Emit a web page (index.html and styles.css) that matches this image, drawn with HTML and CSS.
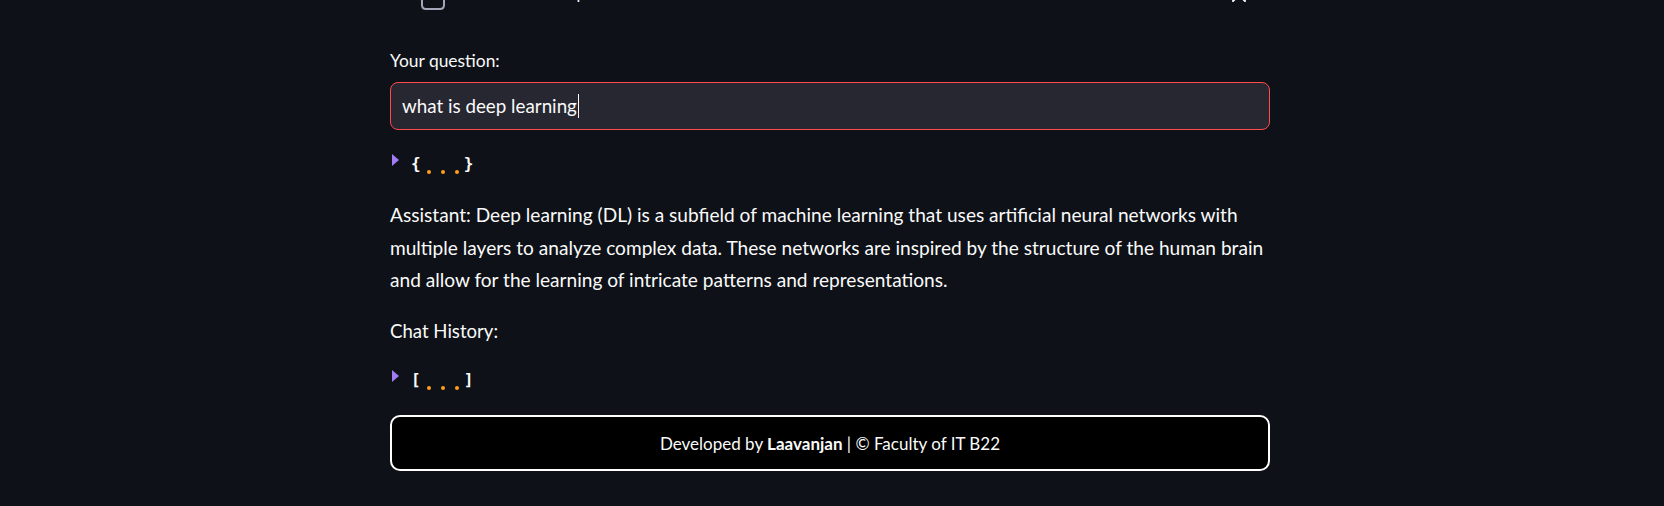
FILE: index.html
```html
<!DOCTYPE html>
<html lang="en">
<head>
<meta charset="utf-8">
<title>Chat</title>
<link rel="stylesheet" href="styles.css">
</head>
<body>
<div class="page">
  <main class="main">
    <div class="file-row">
      <svg class="file-icon" width="24" height="32" viewBox="0 0 24 32" aria-hidden="true">
        <path d="M4 1 H15 L23 9 V27 Q23 31 19 31 H5 Q1 31 1 27 V4 Q1 1 4 1 Z" fill="none" stroke="#a3a8b8" stroke-width="2"/>
      </svg>
      <div class="file-meta">
        <span class="file-name">transformers.pdf</span>
        <span class="file-size">9.0MB</span>
      </div>
      <svg class="file-close" width="16" height="16" viewBox="0 0 16 16" aria-hidden="true">
        <path d="M2 2 L14 14 M14 2 L2 14" stroke="#fafafa" stroke-width="2" stroke-linecap="round"/>
      </svg>
    </div>

    <label class="field-label">Your question:</label>
    <div class="text-input"><span class="input-value">what is deep learning</span><span class="caret"></span></div>

    <div class="json-row">
      <span class="json-toggle"></span>
      <span class="json-brace json-open">{</span><span class="json-dots"><i></i><i></i><i></i></span><span class="json-brace">}</span>
    </div>

    <p class="answer">Assistant: Deep learning (DL) is a subfield of machine learning that uses artificial neural networks with multiple layers to analyze complex data. These networks are inspired by the structure of the human brain and allow for the learning of intricate patterns and representations.</p>

    <p class="history-label">Chat History:</p>

    <div class="json-row">
      <span class="json-toggle"></span>
      <span class="json-brace json-open">[</span><span class="json-dots"><i></i><i></i><i></i></span><span class="json-brace">]</span>
    </div>

    <footer class="footer">Developed by&nbsp;<b>Laavanjan</b>&nbsp;| © Faculty of IT B22</footer>
  </main>
</div>
</body>
</html>
```

FILE: styles.css
```css
html, body {
  margin: 0;
  padding: 0;
  background: #0e1117;
  color: #fafafa;
  font-family: Lato, "Source Sans Pro", "Noto Sans", sans-serif;
}

.page {
  display: flex;
  justify-content: center;
  padding-right: 4px;
  height: 506px;
  overflow: hidden;
}

.main {
  width: 880px;
  display: flex;
  flex-direction: column;
}

/* uploaded file row (scrolled mostly out of view) */
.file-row {
  height: 40px;
  margin-top: -30px;
  display: flex;
  align-items: flex-end;
  padding-left: 31px;
}

.file-icon {
  display: block;
  flex: none;
}

.file-meta {
  display: flex;
  align-items: baseline;
  gap: 10px;
  margin-left: 35px;
  margin-bottom: 6px;
  line-height: 20px;
}

.file-name {
  font-size: 16.5px;
  color: #fafafa;
}

.file-size {
  font-size: 14px;
  color: rgba(250, 250, 250, 0.6);
}

.file-close {
  display: block;
  margin-left: auto;
  margin-right: 23px;
  margin-bottom: 7px;
}

/* question input */
.field-label {
  display: block;
  margin-top: 39px;
  font-size: 17.4px;
  line-height: 24px;
}

.text-input {
  margin-top: 9px;
  height: 48px;
  box-sizing: border-box;
  border: 1px solid #ff4b4b;
  border-radius: 8px;
  background: #262730;
  padding-left: 11px;
  display: flex;
  align-items: center;
  font-size: 18.8px;
  line-height: 46px;
}

.caret {
  width: 1px;
  height: 24px;
  background: #fafafa;
  margin-left: 1px;
}

/* collapsed json viewer */
.json-row {
  height: 24px;
  margin-top: 20px;
  display: flex;
  align-items: flex-start;
  padding-left: 2px;
  font-family: "DejaVu Sans Mono", "Liberation Mono", monospace;
  font-size: 16px;
  line-height: 24px;
}

.json-toggle {
  flex: none;
  width: 0;
  height: 0;
  margin-top: 4px;
  border-top: 6px solid transparent;
  border-bottom: 6px solid transparent;
  border-left: 7px solid #a07cf5;
}

.json-brace {
  color: #fafafa;
  font-weight: bold;
  margin-top: 2px;
}

.json-open {
  margin-left: 12px;
}

.json-dots {
  display: flex;
  gap: 10px;
  align-self: flex-end;
  margin: 0 5px 0 6px;
}

.json-dots i {
  width: 4px;
  height: 4px;
  border-radius: 50%;
  background: #ff9f1a;
}

/* assistant answer */
.answer {
  margin: 25px -12px 0 0;
  font-size: 19.1px;
  line-height: 32.6px;
}

.history-label {
  margin: 18px 0 0;
  font-size: 18.6px;
  line-height: 32.6px;
}

.history-label + .json-row {
  margin-top: 19px;
}

/* footer */
.footer {
  margin-top: 25px;
  height: 56px;
  box-sizing: border-box;
  border: 2px solid #ffffff;
  border-radius: 10px;
  background: #000000;
  display: flex;
  align-items: center;
  justify-content: center;
  font-size: 17px;
}

.footer b {
  font-weight: 700;
}
```
